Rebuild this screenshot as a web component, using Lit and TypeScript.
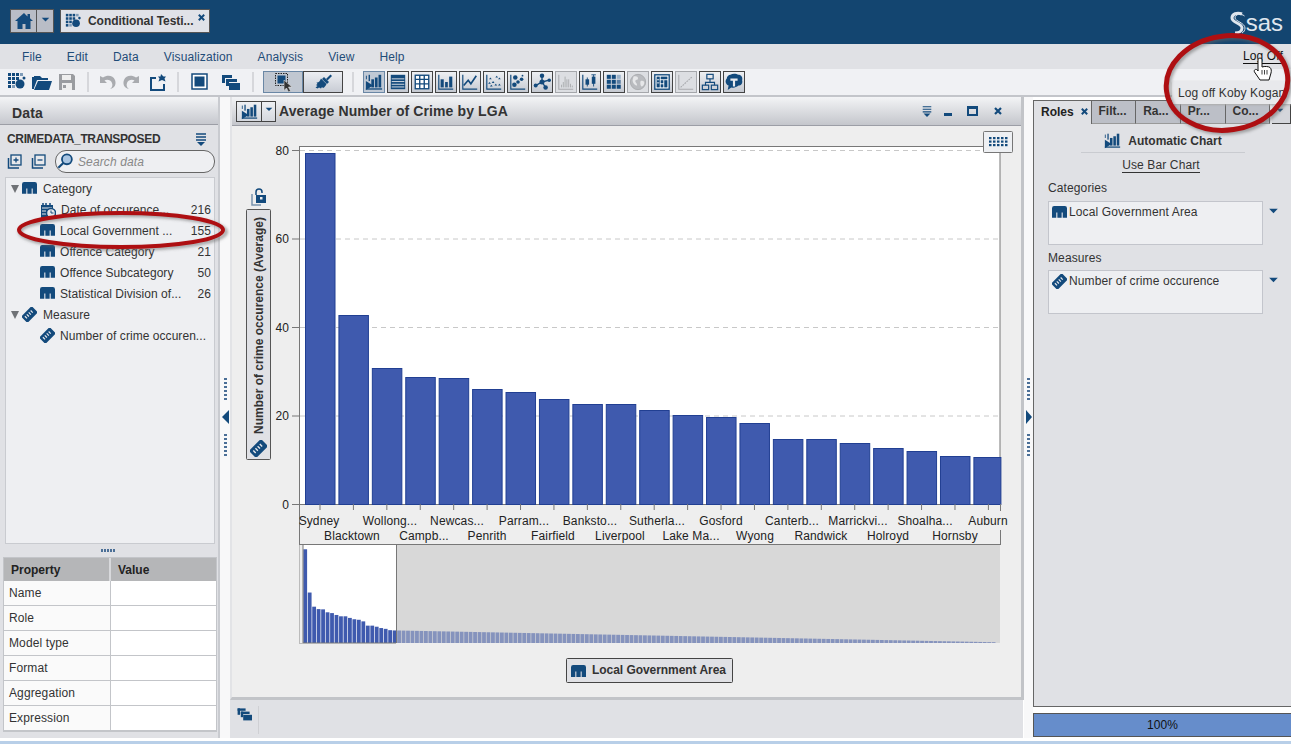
import { LitElement, html, css, svg } from "lit";
import { customElement } from "lit/decorators.js";

const N = "#134a7c";
const G = "#a9abaf";

const paths: Record<string, any> = {
  home: svg`<path d="M10 2 1 10h2.500v8h5v-5h3v5h5v-8H19l-3-2.700V3h-2.500v2.500z" fill="${N}"/>`,
  exploration: svg`<g fill="${N}"><rect x="1" y="1" width="3" height="3"/><rect x="5" y="1" width="3" height="3"/><rect x="9" y="1" width="3" height="3"/><rect x="13" y="1" width="3" height="3" fill="#7f9cb8"/><rect x="1" y="5" width="3" height="3"/><rect x="5" y="5" width="3" height="3"/><rect x="9" y="5" width="3" height="3"/><rect x="1" y="9" width="3" height="3"/><rect x="5" y="9" width="3" height="3"/><rect x="1" y="13" width="3" height="3"/><rect x="5" y="13" width="3" height="3" fill="#7f9cb8"/><circle cx="13" cy="12" r="4.500"/><circle cx="17" cy="6" r="1.500"/></g>`,
  folder: svg`<path d="M2 4h6l2 2h6v2H5L2 16zM6 9h14l-3 9H2z" fill="${N}"/><path d="M1 5v12" stroke="${N}" stroke-width="2"/>`,
  save: svg`<path d="M2 2h14l2 2v14H2z" fill="#9a9ca0"/><rect x="5" y="3" width="9" height="5" fill="#eee"/><rect x="5" y="11" width="10" height="7" fill="#eee"/><rect x="6" y="13" width="3" height="3" fill="#9a9ca0"/>`,
  undo: svg`<path d="M3 4v7h7L7.500 8.500C10 7 14 8 15 11c1 2.500 0 5-2 6 5-1 6.500-5 5-9C16 3 10 3 6 5.500z" fill="#a9abaf"/>`,
  redo: svg`<path d="M17 4v7h-7l2.500-2.500C10 7 6 8 5 11c-1 2.500 0 5 2 6-5-1-6.500-5-5-9C4 3 10 3 14 5.500z" fill="#a9abaf"/>`,
  share: svg`<path d="M3 5h6v2H5v10h11v-5h2v7H3z" fill="${N}"/><path d="M14 2l2.500 2.500H19l-1.500 2 1 3-3.500-1.500-3.500 1.500 1-3-1.500-2h2.500z" fill="${N}"/>`,
  page: svg`<rect x="2" y="2" width="15" height="15" fill="#fff" stroke="${N}" stroke-width="1.500"/><rect x="4.500" y="4.500" width="10" height="10" fill="${N}"/>`,
  stack: svg`<rect x="2" y="3" width="10" height="3" fill="${N}"/><rect x="2" y="3" width="3" height="8" fill="${N}"/><rect x="6" y="7" width="11" height="3" fill="${N}"/><rect x="6" y="7" width="3" height="7" fill="${N}"/><rect x="9" y="11" width="11" height="7" fill="${N}"/>`,
  select: svg`<rect x="2.500" y="1.500" width="12" height="12" fill="none" stroke="#222" stroke-width="1" stroke-dasharray="1.500 1"/><rect x="4.500" y="3.500" width="8" height="8" fill="${N}"/><path d="M11 8l8 7h-3.500l2 4-2 1-2-4-2.500 2.500z" fill="#333" stroke="#ddd" stroke-width=".6"/>`,
  brush: svg`<path d="M13 7l4.500-4.500 1.500 1.500L14.500 8.500z" fill="${N}"/><path d="M11 5l5 5-2 2-5-5z" fill="${N}"/><path d="M9 7.500l4.500 4.500c-1 2-2 3.500-3.500 4l-1-1-1 1.500-2-1-1.500 1-2-1 2-1.500-1.500-1 1.500-1 -1-1.500c2 .5 3.500-1.500 4.500-4z" fill="${N}"/>`,
  auto: svg`<g fill="${N}"><rect x="4" y="2" width="1.500" height="7"/><rect x="7" y="7" width="3" height="9"/><rect x="11" y="5" width="3" height="11"/><rect x="15" y="2" width="3" height="14"/><path d="M1 9l8 5-8 5z"/><rect x="1" y="17" width="18" height="1.500"/><rect x="1" y="3" width="1" height="4"/></g>`,
  list: svg`<g fill="${N}"><rect x="2" y="2" width="16" height="16"/></g><g stroke="#e4e6ea" stroke-width="1"><path d="M3 6.500h14M3 9.500h14M3 12.500h14M3 15.500h14"/></g>`,
  cross: svg`<rect x="2.500" y="2.500" width="15" height="15" fill="#fff" stroke="${N}" stroke-width="1.500"/><path d="M2.500 7h15M2.500 12h15M7.500 2.500v15M12.500 2.500v15" stroke="${N}" stroke-width="1.500"/>`,
  bars: svg`<g fill="${N}"><rect x="4" y="7" width="3.500" height="9"/><rect x="9" y="10" width="3" height="6"/><rect x="13.500" y="4" width="3.500" height="12"/></g><path d="M2 2v16h16" fill="none" stroke="${N}" stroke-width="1.300"/>`,
  line: svg`<path d="M2 2v16h16" fill="none" stroke="${N}" stroke-width="1.300"/><path d="M3 14l5-6 3 4 6-9" fill="none" stroke="${N}" stroke-width="1.800"/>`,
  scatter: svg`<path d="M2 2v16h16" fill="none" stroke="${N}" stroke-width="1.300"/><g fill="${N}"><path d="M6 5l1.500 2h-3zM13 3l1.500 2h-3zM16 5l1.500 2h-3zM5 10l1.500 2h-3zM9 9l1.500 2h-3zM12 12l1.500 2h-3zM7 13l1.500 2h-3zM16 12l1.500 2h-3z"/></g>`,
  bubble: svg`<path d="M2 2v16h16" fill="none" stroke="${N}" stroke-width="1.300"/><g fill="${N}"><circle cx="7" cy="5" r="2.500"/><circle cx="14" cy="7" r="2"/><circle cx="10" cy="10" r="2"/><circle cx="6" cy="13" r="2.500"/><circle cx="15" cy="3" r="1"/></g>`,
  network: svg`<path d="M10 3v7M3 14l7-4 8-2M10 10l4 6" stroke="${N}" stroke-width="1.500" fill="none"/><g fill="${N}"><circle cx="10" cy="3" r="2.500"/><circle cx="3" cy="14" r="2.200"/><circle cx="10" cy="10" r="2.800"/><circle cx="18" cy="8" r="2"/><circle cx="14" cy="16" r="2.500"/></g>`,
  histo: svg`<path d="M2 2v16h16" fill="none" stroke="${G}" stroke-width="1.200"/><path d="M5 16v-3M7 16v-6M9 16V4M11 16V7M13 16v-9M15 16v-4M17 16v-2" stroke="${G}" stroke-width="1"/>`,
  box: svg`<path d="M2 2v16h16" fill="none" stroke="${N}" stroke-width="1.300"/><g fill="${N}"><rect x="5" y="7" width="4" height="6"/><rect x="12" y="4" width="4" height="8"/></g><path d="M7 5v10M14 2v13M11.500 2h5" stroke="${N}" stroke-width="1"/>`,
  heat: svg`<g fill="${N}"><rect x="2" y="2" width="4.500" height="4.500"/><rect x="7.500" y="2" width="4.500" height="4.500"/><rect x="13" y="2" width="4.500" height="4.500" fill="#9db3c9"/><rect x="2" y="7.500" width="4.500" height="4.500"/><rect x="7.500" y="7.500" width="4.500" height="4.500"/><rect x="13" y="7.500" width="4.500" height="4.500" fill="#5c7fa3"/><rect x="2" y="13" width="4.500" height="4.500"/><rect x="7.500" y="13" width="4.500" height="4.500"/><rect x="13" y="13" width="4.500" height="4.500"/></g>`,
  geo: svg`<circle cx="10" cy="10" r="8.500" fill="#b9bbbf" stroke="${G}" stroke-width="1"/><path d="M5 4c3-1 5 0 5 2s-3 1-3 3 2 2 2 5c-2 0-5-3-5-6zM13 9c2-1 4 0 4 2s-2 4-3 4-2-4-1-6z" fill="#e6e7e9"/>`,
  tree: svg`<rect x="2" y="2" width="16" height="16" fill="#fff" stroke="${N}" stroke-width="1.500"/><g fill="${N}"><rect x="4" y="4" width="3.500" height="12"/><rect x="8.500" y="4" width="7.500" height="3"/><rect x="8.500" y="8" width="3" height="3.500"/><rect x="12.500" y="8" width="3.500" height="8"/><rect x="8.500" y="12.500" width="3" height="3.500"/></g><path d="M4.500 7.500h2.500M4.500 11h2.500" stroke="#fff"/>`,
  matrix: svg`<path d="M2 2v16h16" fill="none" stroke="${G}" stroke-width="1.200"/><path d="M4 16 17 4" stroke="${G}" stroke-width="1.200" stroke-dasharray="2 1"/>`,
  org: svg`<g fill="none" stroke="${N}" stroke-width="1.300"><rect x="6.500" y="1.500" width="7" height="5"/><rect x="1.500" y="13.500" width="7" height="5"/><rect x="11.500" y="13.500" width="7" height="5"/><path d="M10 6.500v4M5 13.500v-3h10v3"/></g>`,
  cloud: svg`<path d="M6 2c3-2 7-1 9 0 3 0 5 3 4 6 1 3-1 6-4 6-3 2-5 3-8 2l-4 3 1-5C0 12 0 8 2 6c0-2 2-4 4-4z" fill="${N}"/><path d="M6 6h8v2.500h-2.800V15H8.800V8.500H6z" fill="#e8eaee"/>`,
  cat: svg`<path d="M2 1h10a2 2 0 0 1 2 2v9h-4V7H9v5H5V7H4v5H0V3a2 2 0 0 1 2-2z" fill="${N}"/>`,
  measure: svg`<g transform="rotate(-45 7.500 7.500)"><rect x="0" y="3" width="15" height="9" rx="1" fill="${N}"/><path d="M3 5.500v3M5.700 5.500v3M8.400 5.500v3M11.100 5.500v3" stroke="#e8e9ec" stroke-width="1.200"/></g>`,
  date: svg`<rect x="1" y="3" width="12" height="13" fill="${N}"/><path d="M3 1v3M6 1v3M10 1v3" stroke="${N}" stroke-width="1.500"/><path d="M2 6h10M2 9h4M2 12h4" stroke="#e8e9ec"/><circle cx="11" cy="11" r="4.500" fill="#e8e9ec" stroke="${N}" stroke-width="1.500"/><path d="M11 8.500V11h2.500" stroke="${N}" fill="none"/>`,
  expand: svg`<rect x="4" y="1" width="10" height="10" fill="#e8e9ec" stroke="${N}" stroke-width="1.300"/><path d="M1.500 4v10H12" fill="none" stroke="${N}" stroke-width="1.500"/><path d="M9 3.500v5M6.500 6h5" stroke="${N}" stroke-width="1.300"/>`,
  collapse: svg`<rect x="4" y="1" width="10" height="10" fill="#e8e9ec" stroke="${N}" stroke-width="1.300"/><path d="M1.500 4v10H12" fill="none" stroke="${N}" stroke-width="1.500"/><path d="M6.500 6h5" stroke="${N}" stroke-width="1.300"/>`,
  search: svg`<circle cx="11" cy="7" r="5.500" fill="#a9c5e2" stroke="${N}" stroke-width="2"/><path d="M7 11l-5.500 5.500" stroke="${N}" stroke-width="2.400"/>`,
  menu: svg`<path d="M2 2h10M2 5h10M2 8h10" stroke="${N}" stroke-width="1.300"/><path d="M3 10h8l-4 4z" fill="${N}"/>`,
  caret: svg`<path d="M1 1h10L6 6z" fill="${N}"/>`,
  close: svg`<path d="M2 2l6 6M8 2 2 8" stroke="${N}" stroke-width="2.200"/>`,
};

const ic = (name: string, size = 20, vb = 20) =>
  html`<svg class="ic" width="${size}" height="${size}" viewBox="0 0 ${vb} ${vb}">${paths[name]}</svg>`;

const tops = [153, 315, 368, 377, 378, 389, 392, 399, 404, 404, 410, 415, 417, 423, 439, 439, 443, 448, 451, 456, 457];
const row1: [string, number][] = [["Sydney", 319], ["Wollong...", 390], ["Newcas...", 457], ["Parram...", 524], ["Banksto...", 590], ["Sutherla...", 657], ["Gosford", 721], ["Canterb...", 792], ["Marrickvi...", 858], ["Shoalha...", 925], ["Auburn", 988]];
const row2: [string, number][] = [["Blacktown", 352], ["Campb...", 424], ["Penrith", 487], ["Fairfield", 553], ["Liverpool", 620], ["Lake Ma...", 691], ["Wyong", 755], ["Randwick", 821], ["Holroyd", 888], ["Hornsby", 955]];
const toolset = ["auto", "list", "cross", "bars", "line", "scatter", "bubble", "network", "histo", "box", "heat", "geo", "tree", "matrix", "org", "cloud"];
const disabled = new Set(["histo", "geo", "matrix"]);
const menus = ["File", "Edit", "Data", "Visualization", "Analysis", "View", "Help"];

@customElement("app-root")
export class AppRoot extends LitElement {
  static styles = css`
    :host { display: block; width: 1291px; height: 744px; position: relative; overflow: hidden; background: #fff;
      font: 12px "Liberation Sans", Arial, sans-serif; color: #333; letter-spacing: .12px; }
    * { box-sizing: border-box; }
    .ic { display: block; flex: none; }
    .head { height: 44px; background: #134570; display: flex; align-items: flex-start; padding: 9px 8px 0 10px; }
    .home { width: 27px; height: 24px; background: #b9bdc6; border: 1px solid #555; display: flex; align-items: center; justify-content: center; }
    .homedrop { width: 17px; height: 24px; background: #b9bdc6; border: 1px solid #555; border-left: 0; display: flex; align-items: center; justify-content: center; margin-right: 6px; }
    .doc { width: 150px; height: 24px; background: #e0e2e8; border: 1px solid #555; display: flex; align-items: center; padding-left: 4px; font-weight: bold; color: #333; gap: 6px; position: relative; letter-spacing: -.05px; }
    .doc .x { position: absolute; right: 3px; top: 3px; }
    .logo { margin-left: auto; display: flex; align-items: center; height: 28px; color: #dfe6ee; font-size: 24px; letter-spacing: 0; line-height: 24px; }
    .menubar { height: 25px; background: #e0e1e5; display: flex; padding-left: 22px; gap: 25px; align-items: center; color: #1f4c78; }
    .logoff { margin-left: auto; margin-right: 8px; color: #111; border-bottom: 1px solid #111; line-height: 13px; }
    .toolbar { height: 26px; background: #f0f1f4; display: flex; align-items: center; padding-left: 4px; }
    .tool { width: 25px; display: flex; justify-content: center; }
    .sep { width: 2px; height: 20px; background: #d6d7db; }
    .s1 { margin-left: 8px; margin-right: 5px; }
    .s2 { margin-left: 8px; margin-right: 8px; }
    .gap5 { margin-left: 5px; }
    .s3 { margin-left: 10px; margin-right: 9px; }
    .s4 { margin-left: 9px; margin-right: 9px; }
    .toggle { width: 40px; height: 22px; border: 1px solid #444; background: linear-gradient(#eceef2, #c8ccd4); display: flex; align-items: center; justify-content: center; }
    .toggle.on { background: #c0c7d1; border-color: #6a87a5; }
    .cb { width: 22px; height: 22px; border: 1px solid #444; background: linear-gradient(#eef0f3, #c5c9d1); display: flex; align-items: center; justify-content: center; margin-right: 2px; }
    .cb.on { background: #c0c9d5; border-color: #6a87a5; }
    .cb.off { border-color: #a5a7ab; background: #dcdee2; }
    .rule { height: 2px; background: #c3c5ca; }
    .main { height: 641px; display: flex; }
    .left { width: 220px; background: #e0e1e5; border-right: 2px solid #c9cbd0; display: flex; flex-direction: column; }
    .ptitle { height: 28px; flex: none; background: linear-gradient(#f3f4f6, #c6c8ce); border-bottom: 1px solid #9c9ea6; font: bold 14px "Liberation Sans", Arial, sans-serif; color: #333; display: flex; align-items: center; padding: 4px 0 0 12px; }
    .src { height: 25px; flex: none; display: flex; align-items: center; justify-content: space-between; padding: 2px 10px 0 7px; font-weight: bold; color: #333; letter-spacing: -.35px; }
    .find { height: 25px; flex: none; display: flex; align-items: center; padding: 0 0 2px 7px; gap: 9px; }
    .search { width: 160px; height: 23px; border: 1px solid #666; border-radius: 11px; background: #eeeff2; display: flex; align-items: center; gap: 3px; padding-left: 1px; font-style: italic; color: #888; }
    .treebox { height: 367px; flex: none; margin: 2px 3px 0 5px; background: #eeeff2; border: 1px solid #c9cbd0; letter-spacing: .05px; }
    .row { height: 21px; display: flex; align-items: center; white-space: nowrap; color: #333; }
    .row.l1 { padding-left: 5px; gap: 2px; }
    .row.l2 { padding: 0 3px 0 34px; gap: 5px; }
    .row .count { margin-left: auto; }
    .tw { width: 0; height: 0; border-left: 4px solid transparent; border-right: 4px solid transparent; border-top: 8px solid #6f7276; margin-right: 1px; }
    .row.l1 .ic { margin-right: 4px; }
    .split { height: 13px; flex: none; display: flex; justify-content: center; align-items: center; padding-right: 2px; }
    .dots { display: flex; gap: 1px; }
    .dots i { width: 2px; height: 3px; background: #4b6f97; }
    .dots.v { flex-direction: column; gap: 2px; }
    .dots.v i { width: 3px; height: 2px; }
    .table { margin: 0 1px 0 3px; flex: none; border: 1px solid #c3c5c9; display: grid; grid-template-columns: 107px 1fr; background: #fff; }
    .th { height: 23px; background: #b5b6b8; font-weight: bold; color: #222; display: flex; align-items: center; padding-left: 7px; border-right: 2px solid #d8d9dc; letter-spacing: 0; }
    .th + .th { border-right: 0; }
    .tn { height: 25px; background: #fafafa; border-right: 1px solid #c3c5c9; border-bottom: 1px solid #c3c5c9; padding-left: 5px; display: flex; align-items: center; color: #333; }
    .tv { height: 25px; border-bottom: 1px solid #c3c5c9; }
    .gut { width: 10px; flex: none; background: #f8f8f9; display: flex; flex-direction: column; align-items: center; padding-top: 281px; gap: 10px; }
    .gut.r { width: 9px; }
    .arrow-l { width: 0; height: 0; border-top: 7px solid transparent; border-bottom: 7px solid transparent; border-right: 7px solid #134a7c; }
    .arrow-r { width: 0; height: 0; border-top: 7px solid transparent; border-bottom: 7px solid transparent; border-left: 6px solid #134a7c; }
    .center { width: 794px; flex: none; display: flex; flex-direction: column; }
    .panel { height: 603px; flex: none; background: #eee; border: 2px solid #e2e3e6; border-right: 3px solid #c2c4c8; border-bottom: 3px solid #c2c4c8; border-top: 0; display: flex; flex-direction: column; }
    .ctitle { height: 29px; flex: none; background: linear-gradient(#f3f4f6, #c4c6cc); border-bottom: 1px solid #9c9ea6; display: flex; align-items: center; padding: 0 18px 0 4px; font: bold 14px "Liberation Sans", Arial, sans-serif; letter-spacing: .1px; color: #333; }
    .cbtn { height: 21px; border: 1px solid #444; display: flex; align-items: center; margin-right: 3px; background: linear-gradient(#eef0f3, #d5d8de); }
    .cbtn span { width: 24px; height: 19px; display: flex; align-items: center; justify-content: center; }
    .cbtn b { width: 14px; height: 19px; border-left: 1px solid #444; display: flex; align-items: center; justify-content: center; }
    .wctl { margin-left: auto; display: flex; gap: 15px; align-items: center; }
    .wctl .ic:first-child { margin-right: -4px; }
    .wmin { width: 8px; height: 3px; background: #134a7c; margin-top: 6px; }
    .wmax { width: 11px; height: 10px; border: 2px solid #134a7c; border-top-width: 3px; }
    .chart { display: block; }
    .strip { flex: 1; background: #e0e1e5; display: flex; align-items: flex-start; padding: 6px 0 0 6px; margin-right: 1px; }
    .strip .vs { width: 1px; height: 28px; background: #cfd0d4; margin-left: 6px; }
    .right { width: 258px; flex: none; display: flex; flex-direction: column; padding-top: 3px; }
    .rpanel { height: 607px; flex: none; background: #e0e1e5; border: 1px solid #666; border-right: 0; border-top: 0; display: flex; flex-direction: column; }
    .tabs { height: 24px; flex: none; display: flex; box-shadow: inset 0 1px 0 #666; }
    .tab { width: 45px; background: #bcbfc7; border: 1px solid #666; border-left: 0; border-bottom: 1px solid #999; padding: 0 0 2px 7px; display: flex; align-items: center; color: #333; font-weight: bold; white-space: nowrap; letter-spacing: 0; }
    .tab.on { width: 58px; background: #e0e1e5; color: #222; border-bottom: 0; gap: 6px; padding-left: 7px; }
    .tab.more { width: 19px; margin-left: 2px; padding: 0 0 0 4px; background: #d4d6db; border-color: #444; }
    .auto { margin: 8px 46px 0 47px; height: 21px; border-bottom: 1px solid #c9cbd0; display: flex; justify-content: center; align-items: center; gap: 7px; padding-bottom: 3px; font-weight: bold; color: #333; letter-spacing: 0; }
    .usebar { text-align: center; margin: 5px 0 1px; padding-right: 3px; line-height: 15px; height: 16px; color: #333; }
    .usebar span { border-bottom: 1px solid #333; }
    .lab { margin: 6px 0 0 14px; line-height: 15px; color: #333; }
    .drop { margin: 5px 0 0 14px; display: flex; align-items: flex-start; gap: 5px; }
    .drop.m { margin-top: 4px; }
    .dbox { width: 215px; height: 44px; background: #eeeff2; border: 1px solid #c3c5cc; padding: 3px 0 0 3px; display: flex; gap: 2px; align-items: flex-start; line-height: 15px; color: #333; }
    .drop .ic.car { margin-top: 7px; }
    .prog { margin-top: 6px; height: 24px; background: #668dcb; border: 1px solid #555; border-right: 0; display: flex; align-items: center; justify-content: center; color: #111; }
    .foot { height: 3px; margin-top: 3px; background: #b8cfe8; }
    .tip { position: absolute; left: 1172px; top: 81px; width: 119px; height: 23px; background: #e8e9ec; display: flex; align-items: center; padding-left: 6px; color: #333; box-shadow: 0 1px 2px #aaa; white-space: nowrap; }
    .over { position: absolute; left: 0; top: 0; pointer-events: none; }
  `;

  chart() {
    const bw = 33.42;
    const bars = tops.map((t, i) => {
      const x = 305 + i * bw;
      const w = i === 20 ? 27 : 29.5;
      return svg`<rect x="${x + 0.5}" y="${t + 0.5}" width="${w}" height="${504 - t}" fill="#3f5aae" stroke="#213f92"/>
        <path d="M${x + 15} 504v6" stroke="#777"/>`;
    });
    const ov: any[] = [];
    for (let i = 0; i < 155; i++) {
      const h = i < 21 ? (504 - tops[i]) * 0.267 : Math.max(0.8, 12.5 - (i - 21) * 0.088);
      const x = 303 + i * 4.47;
      ov.push(svg`<rect x="${x + 0.3}" y="${643 - h}" width="3.800" height="${h}" fill="${i < 21 ? "#3f5aae" : "#8593bd"}"/>`);
    }
    const ys: [number, string][] = [[150, "80"], [238.5, "60"], [327, "40"], [415.5, "20"], [504, "0"]];
    return html`<svg class="chart" width="789" height="571" viewBox="232 126 789 571">
      <rect x="299.500" y="146.500" width="700.500" height="358" fill="#fff" stroke="#777"/>
      ${ys.slice(0, 4).map(([y]) => svg`<path d="M300 ${y + .5}H1000" stroke="#c8c8c8" stroke-dasharray="5 4"/>`)}
      ${bars}
      ${ys.map(([y, t]) => svg`<path d="M292 ${y + .5}h8" stroke="#777"/>
        <text x="289" y="${y + 4.500}" text-anchor="end" font-size="12" fill="#222">${t}</text>`)}
      <path d="M299.500 504v41M1000.500 504v7M1000.500 530v15M299 544.500h702" stroke="#777" fill="none"/>
      ${row1.map(([t, x]) => svg`<text x="${x}" y="525" text-anchor="middle" font-size="12" fill="#222">${t}</text>`)}
      ${row2.map(([t, x]) => svg`<text x="${x}" y="540" text-anchor="middle" font-size="12" fill="#222">${t}</text>`)}
      <rect x="396" y="545" width="604" height="98" fill="#d8d8d8"/>
      <rect x="303" y="545" width="93" height="98" fill="#fff"/>
      ${ov}
      <path d="M303 545v98h93M396.500 545v98" stroke="#777" fill="none"/>
      <path d="M299.500 545v98M299 643.500h4" stroke="#bbb" fill="none"/>
      <svg x="250" y="188" width="18" height="18" viewBox="0 0 18 18">
        <path d="M2 6v11h9" fill="none" stroke="#7a94ae" stroke-width="1.500"/><rect x="6" y="7" width="10" height="8" fill="${N}"/><rect x="10" y="9" width="2.500" height="2.500" fill="#eee"/><path d="M6 7V4a3 3 0 0 1 6 0v1" fill="none" stroke="${N}" stroke-width="1.500"/>
      </svg>
      <rect x="246.500" y="209.500" width="24" height="250" rx="1" fill="#e0e1e5" stroke="#555"/>
      <svg x="250" y="440" width="17" height="17" viewBox="0 0 15 15">${paths.measure}</svg>
      <text transform="translate(263 434) rotate(-90)" font-size="12" font-weight="bold" fill="#333" letter-spacing="0">Number of crime occurence (Average)</text>
      <rect x="983.500" y="131.500" width="29" height="21" rx="1" fill="#eef0f3" stroke="#777"/>
      <g fill="${N}">${[0, 1, 2, 3, 4].map((c) => [0, 1, 2].map((r) => svg`<rect x="${989 + c * 4}" y="${137 + r * 3.5}" width="2.500" height="2.200"/>`))}</g>
      <rect x="566.500" y="658.500" width="166" height="24" rx="1" fill="#e0e1e5" stroke="#444"/>
      <svg x="571" y="664" width="15" height="14" viewBox="0 0 14 13">${paths.cat}</svg>
      <text x="592" y="674" font-size="12" font-weight="bold" fill="#333" letter-spacing="-.05">Local Government Area</text>
    </svg>`;
  }

  dots(count = 6, v = true) {
    return html`<div class="dots ${v ? "v" : ""}">${Array.from({ length: count }, () => html`<i></i>`)}</div>`;
  }

  render() {
    return html`
      <div class="head">
        <div class="home">${ic("home", 20)}</div>
        <div class="homedrop">${ic("caret", 9, 12)}</div>
        <div class="doc">${ic("exploration", 17)}<span>Conditional Testi...</span><span class="x">${ic("close", 9, 10)}</span></div>
        <div class="logo">
          <svg width="17" height="24" viewBox="0 0 17 24"><path d="M13 3C8 1 3 3 3 7c0 5 10 5 10 10 0 3-3 5-7 5" fill="none" stroke="#dfe6ee" stroke-width="3"/><path d="M15.500 5C12 2 6 3 6 7c0 3 10 5 10 10 0 2-1 4-3 5" fill="none" stroke="#dfe6ee" stroke-width="1"/></svg>
          <span>sas</span>
        </div>
      </div>
      <div class="menubar">
        ${menus.map((m) => html`<span>${m}</span>`)}
        <span class="logoff">Log Off</span>
      </div>
      <div class="toolbar">
        <span class="tool">${ic("exploration")}</span><span class="tool">${ic("folder")}</span><span class="tool">${ic("save")}</span>
        <span class="sep s1"></span>
        <span class="tool">${ic("undo")}</span><span class="tool">${ic("redo")}</span><span class="tool">${ic("share")}</span>
        <span class="sep s2"></span>
        <span class="tool">${ic("page")}</span><span class="tool gap5">${ic("stack")}</span>
        <span class="sep s3"></span>
        <span class="toggle on">${ic("select")}</span><span class="toggle">${ic("brush")}</span>
        <span class="sep s4"></span>
        ${toolset.map((t, i) => html`<span class="cb ${i === 0 ? "on" : ""} ${disabled.has(t) ? "off" : ""}">${ic(t, 18)}</span>`)}
      </div>
      <div class="rule"></div>
      <div class="main">
        <div class="left">
          <div class="ptitle">Data</div>
          <div class="src"><span>CRIMEDATA_TRANSPOSED</span>${ic("menu", 14, 14)}</div>
          <div class="find">${ic("expand", 15, 15)}${ic("collapse", 15, 15)}
            <div class="search">${ic("search", 18)}<span>Search data</span></div></div>
          <div class="treebox">
            <div class="row l1"><i class="tw"></i>${ic("cat", 15, 14)}<span>Category</span></div>
            <div class="row l2">${ic("date", 16, 16)}<span>Date of occurence...</span><span class="count">216</span></div>
            <div class="row l2">${ic("cat", 15, 14)}<span>Local Government ...</span><span class="count">155</span></div>
            <div class="row l2">${ic("cat", 15, 14)}<span>Offence Category</span><span class="count">21</span></div>
            <div class="row l2">${ic("cat", 15, 14)}<span>Offence Subcategory</span><span class="count">50</span></div>
            <div class="row l2">${ic("cat", 15, 14)}<span>Statistical Division of...</span><span class="count">26</span></div>
            <div class="row l1"><i class="tw"></i>${ic("measure", 15, 15)}<span>Measure</span></div>
            <div class="row l2">${ic("measure", 15, 15)}<span>Number of crime occuren...</span></div>
          </div>
          <div class="split">${this.dots(5, false)}</div>
          <div class="table">
            <div class="th">Property</div><div class="th">Value</div>
            ${["Name", "Role", "Model type", "Format", "Aggregation", "Expression"].map((p) => html`<div class="tn">${p}</div><div class="tv"></div>`)}
          </div>
        </div>
        <div class="gut">${this.dots()}<div class="arrow-l"></div>${this.dots()}</div>
        <div class="center">
          <div class="panel">
            <div class="ctitle">
              <div class="cbtn"><span>${ic("auto", 17)}</span><b>${ic("caret", 8, 12)}</b></div>
              <span>Average Number of Crime by LGA</span>
              <div class="wctl">${ic("menu", 12, 14)}<i class="wmin"></i><i class="wmax"></i>${ic("close", 10, 10)}</div>
            </div>
            ${this.chart()}
          </div>
          <div class="strip">${ic("stack", 16)}<i class="vs"></i></div>
        </div>
        <div class="gut r">${this.dots()}<div class="arrow-r"></div>${this.dots()}</div>
        <div class="right">
          <div class="rpanel">
            <div class="tabs">
              <div class="tab on"><span>Roles</span>${ic("close", 9, 10)}</div>
              <div class="tab">Filt...</div><div class="tab">Ra...</div><div class="tab">Pr...</div><div class="tab">Co...</div>
              <div class="tab more">${ic("caret", 8, 12)}</div>
            </div>
            <div class="auto">${ic("auto", 17)}<span>Automatic Chart</span></div>
            <div class="usebar"><span>Use Bar Chart</span></div>
            <div class="lab">Categories</div>
            <div class="drop"><div class="dbox">${ic("cat", 15, 14)}<span>Local Government Area</span></div><svg class="ic car" width="11" height="6" viewBox="0 0 12 7">${paths.caret}</svg></div>
            <div class="lab">Measures</div>
            <div class="drop m"><div class="dbox">${ic("measure", 15, 15)}<span>Number of crime occurence</span></div><svg class="ic car" width="11" height="6" viewBox="0 0 12 7">${paths.caret}</svg></div>
          </div>
          <div class="prog">100%</div>
        </div>
      </div>
      <div class="foot"></div>
      <div class="tip">Log off Koby Kogan</div>
      <svg class="over" width="1291" height="744" viewBox="0 0 1291 744">
        <defs><filter id="sh" x="-20%" y="-40%" width="140%" height="180%"><feGaussianBlur stdDeviation="1.500"/></filter></defs>
        <g fill="none">
          <ellipse cx="123" cy="232" rx="103" ry="17" stroke="#666" stroke-opacity=".55" stroke-width="4" filter="url(#sh)"/>
          <ellipse cx="121" cy="230" rx="102" ry="17" stroke="#ae0f12" stroke-width="4"/>
          <ellipse cx="1229" cy="85" rx="61" ry="47" transform="rotate(-8 1229 85)" stroke="#666" stroke-opacity=".55" stroke-width="5" filter="url(#sh)"/>
          <ellipse cx="1227" cy="83" rx="61" ry="47" transform="rotate(-8 1227 83)" stroke="#ae0f12" stroke-width="5"/>
        </g>
        <path d="M1258 60c0-2.500 4-2.500 4 0v7c2.500-1 7-.5 8 .5 1.500 1.500 1.500 3.500 1 5.500l-2 7h-9l-5.500-8c-1-2 1-3.500 3-2l.5 1z" fill="#fff" stroke="#111" stroke-width="1"/>
        <path d="M1262 70v4.500M1264.500 70v4.500M1267 70v4.500" stroke="#111" stroke-width=".8"/>
      </svg>
    `;
  }
}
